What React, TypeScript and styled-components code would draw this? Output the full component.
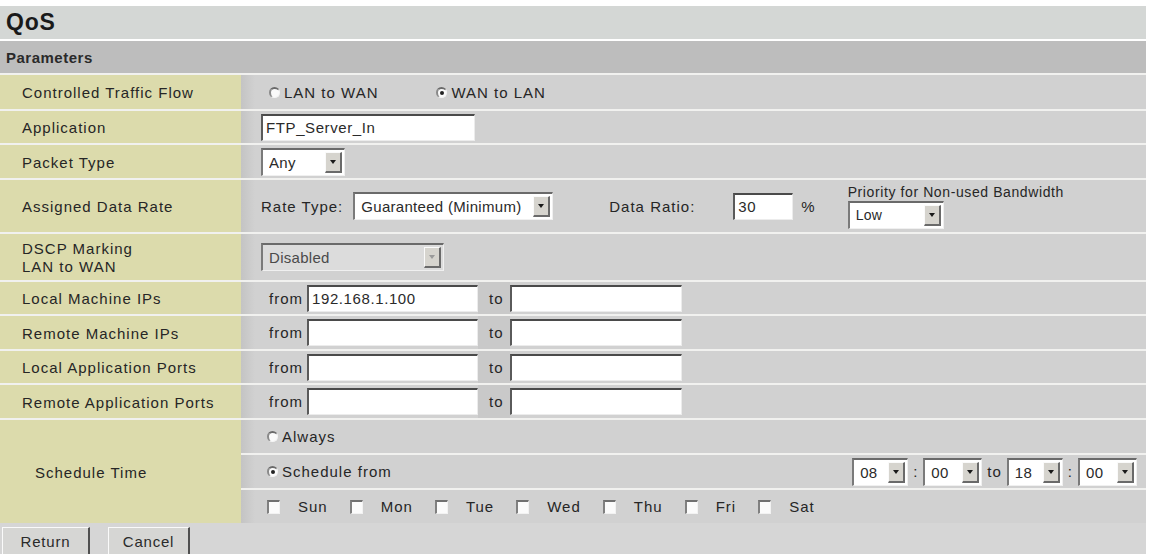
import React from 'react';
import styled, {createGlobalStyle} from 'styled-components';

const GlobalStyle = createGlobalStyle`
  body {
    margin: 0;
    background: #ffffff;
    font-family: "Liberation Sans", Arial, sans-serif;
    color: #262626;
  }
`;

const Page = styled.div`
  width: 1146px;
  padding-top: 6px;
  font-size: 15px;
  letter-spacing: 1px;
`;

const TitleBar = styled.div`
  box-sizing: border-box;
  height: 33px;
  display: flex;
  align-items: center;
  padding-left: 6px;
  background: #d4d7d5;
  font-size: 23px;
  font-weight: bold;
  letter-spacing: 0.8px;
  color: #1a1a1a;
`;

const SectionBar = styled.div`
  box-sizing: border-box;
  height: 32px;
  margin-top: 2px;
  display: flex;
  align-items: center;
  padding-left: 6px;
  background: #bdbdbd;
  font-weight: bold;
  font-size: 15px;
  letter-spacing: 0.5px;
  color: #2a2a2a;
`;

const Row = styled.div<{$h: number}>`
  box-sizing: border-box;
  display: grid;
  grid-template-columns: 241px 1fr;
  height: ${p => p.$h}px;
  border-top: 2px solid #f1f1ef;
`;

const Label = styled.div<{$indent?: number}>`
  display: flex;
  align-items: center;
  padding-left: ${p => p.$indent ?? 22}px;
  padding-top: 2px;
  background: #dcdbac;
  line-height: 18px;
`;

const Value = styled.div<{$pad?: number}>`
  display: flex;
  align-items: center;
  padding-left: ${p => p.$pad ?? 20}px;
  padding-right: 9px;
  background: linear-gradient(90deg, #c4c4c4 0, #d1d1d1 14px, #d1d1d1 100%);
`;

const SubRows = styled.div`
  display: flex;
  flex-direction: column;
  background: #f1f1ef;
  gap: 2px;
`;

const SubRow = styled(Value)`
  flex: 1;
  padding-left: 26px;
`;

const Radio = styled.span<{$on?: boolean}>`
  position: relative;
  display: inline-block;
  width: 11px;
  height: 11px;
  border-radius: 50%;
  background: #fafafa;
  border-top: 2px solid #6a6a6a;
  border-left: 2px solid #8a8a8a;
  border-right: 1px solid #f4f4f4;
  border-bottom: 1px solid #f4f4f4;
  box-sizing: border-box;
  margin-right: 4px;
  &::after {
    content: '';
    display: ${p => (p.$on ? 'block' : 'none')};
    position: absolute;
    left: 2px;
    top: 2px;
    width: 4px;
    height: 4px;
    border-radius: 50%;
    background: #222;
  }
`;

const Option = styled.span<{$gap?: number}>`
  display: inline-flex;
  align-items: center;
  margin-right: ${p => p.$gap ?? 0}px;
`;

const Input = styled.input<{$w: number}>`
  box-sizing: border-box;
  width: ${p => p.$w}px;
  height: 27px;
  padding: 0 3px;
  background: #fff;
  border-top: 2px solid #4a4a4a;
  border-left: 2px solid #5a5a5a;
  border-right: 1px solid #ececec;
  border-bottom: 1px solid #ececec;
  font-family: "Liberation Sans", Arial, sans-serif;
  font-size: 15px;
  letter-spacing: 0.6px;
  color: #2a2a2a;
  outline: none;
`;

const SelectBox = styled.div<{$w: number; $disabled?: boolean}>`
  box-sizing: border-box;
  display: inline-flex;
  align-items: center;
  width: ${p => p.$w}px;
  height: 28px;
  padding: 0 2px 0 6px;
  background: ${p => (p.$disabled ? '#dcdcdc' : '#ffffff')};
  border-top: 2px solid #6a6a6a;
  border-left: 2px solid #7a7a7a;
  border-right: 1px solid #f0f0f0;
  border-bottom: 1px solid #f0f0f0;
  letter-spacing: 0.3px;
  color: ${p => (p.$disabled ? '#4a4a4a' : '#2a2a2a')};
`;

const SelectText = styled.span`
  flex: 1;
  white-space: nowrap;
  overflow: hidden;
`;

const ArrowBtn = styled.span<{$disabled?: boolean}>`
  box-sizing: border-box;
  display: flex;
  align-items: center;
  justify-content: center;
  flex: none;
  width: 17px;
  height: 21px;
  background: #d6d4ce;
  border-top: 1px solid #fafafa;
  border-left: 1px solid #fafafa;
  border-right: 2px solid #6a6a6a;
  border-bottom: 2px solid #6a6a6a;
  &::after {
    content: '';
    border-left: 3px solid transparent;
    border-right: 3px solid transparent;
    border-top: 4px solid ${p => (p.$disabled ? '#9a9a9a' : '#1a1a1a')};
  }
`;

const Select = ({w, value, disabled}: {w: number; value: string; disabled?: boolean}) => (
  <SelectBox $w={w} $disabled={disabled}>
    <SelectText>{value}</SelectText>
    <ArrowBtn $disabled={disabled} />
  </SelectBox>
);

const Text = styled.span<{$ml?: number; $mr?: number}>`
  margin-left: ${p => p.$ml ?? 0}px;
  margin-right: ${p => p.$mr ?? 0}px;
  white-space: nowrap;
`;

const Priority = styled.div`
  display: flex;
  flex-direction: column;
  gap: 1px;
  margin-left: 32px;
  font-size: 14px;
  letter-spacing: 0.6px;
`;

const RangeValue = styled(Value)`
  padding-left: 28px;
`;

const ToCell = styled.span`
  display: flex;
  align-items: center;
  align-self: stretch;
  width: 32px;
  padding-left: 11px;
  box-sizing: border-box;
  background: #c9c9c9;
`;

const TimeGroup = styled.div`
  margin-left: auto;
  display: flex;
  align-items: center;
  gap: 5px;
`;

const Check = styled.span`
  display: inline-block;
  box-sizing: border-box;
  width: 13px;
  height: 14px;
  background: #fbfbfb;
  border-top: 2px solid #707070;
  border-left: 2px solid #808080;
  border-right: 1px solid #f2f2f2;
  border-bottom: 1px solid #f2f2f2;
`;

const Day = styled.span`
  display: inline-flex;
  align-items: center;
  gap: 18px;
  margin-right: 22px;
`;

const ButtonBar = styled.div`
  display: flex;
  align-items: flex-end;
  gap: 18px;
  height: 31px;
  padding-left: 2px;
  background: #d6d6d6;
`;

const Button = styled.button<{$w: number}>`
  box-sizing: border-box;
  width: ${p => p.$w}px;
  height: 27px;
  background: #d6d6d4;
  border-top: 1px solid #fafafa;
  border-left: 1px solid #fafafa;
  border-right: 2px solid #505050;
  border-bottom: none;
  font-family: "Liberation Sans", Arial, sans-serif;
  font-size: 15px;
  letter-spacing: 0.8px;
  color: #2a2a2a;
  padding: 0;
`;

const ranges = [
  {label: 'Local Machine IPs', from: '192.168.1.100', h: 34},
  {label: 'Remote Machine IPs', from: '', h: 35},
  {label: 'Local Application Ports', from: '', h: 34},
  {label: 'Remote Application Ports', from: '', h: 35},
];

const days = ['Sun', 'Mon', 'Tue', 'Wed', 'Thu', 'Fri', 'Sat'];

export default function App() {
  return (
    <>
      <GlobalStyle />
      <Page>
        <TitleBar>QoS</TitleBar>
        <SectionBar>Parameters</SectionBar>

        <Row $h={36}>
          <Label>Controlled Traffic Flow</Label>
          <Value $pad={28}>
            <Option $gap={58}><Radio />LAN to WAN</Option>
            <Option><Radio $on />WAN to LAN</Option>
          </Value>
        </Row>

        <Row $h={34}>
          <Label>Application</Label>
          <Value>
            <Input $w={214} defaultValue="FTP_Server_In" />
          </Value>
        </Row>

        <Row $h={35}>
          <Label>Packet Type</Label>
          <Value>
            <Select w={84} value="Any" />
          </Value>
        </Row>

        <Row $h={54}>
          <Label>Assigned Data Rate</Label>
          <Value>
            <Text $mr={10}>Rate Type:</Text>
            <Select w={200} value="Guaranteed (Minimum)" />
            <Text $ml={56} $mr={38}>Data Ratio:</Text>
            <Input $w={60} defaultValue="30" />
            <Text $ml={8}>%</Text>
            <Priority>
              <span>Priority for Non-used Bandwidth</span>
              <Select w={96} value="Low" />
            </Priority>
          </Value>
        </Row>

        <Row $h={48}>
          <Label>DSCP Marking<br />LAN to WAN</Label>
          <Value>
            <Select w={183} value="Disabled" disabled />
          </Value>
        </Row>

        {ranges.map(r => (
          <Row $h={r.h} key={r.label}>
            <Label>{r.label}</Label>
            <RangeValue>
              <Text $mr={4}>from</Text>
              <Input $w={171} defaultValue={r.from} />
              <ToCell>to</ToCell>
              <Input $w={172} defaultValue="" />
            </RangeValue>
          </Row>
        ))}

        <Row $h={105}>
          <Label $indent={35}>Schedule Time</Label>
          <SubRows>
            <SubRow>
              <Option><Radio />Always</Option>
            </SubRow>
            <SubRow>
              <Option><Radio $on />Schedule from</Option>
              <TimeGroup>
                <Select w={56} value="08" />
                <span>:</span>
                <Select w={59} value="00" />
                <span>to</span>
                <Select w={56} value="18" />
                <span>:</span>
                <Select w={59} value="00" />
              </TimeGroup>
            </SubRow>
            <SubRow $pad={26}>
              {days.map(d => (
                <Day key={d}><Check />{d}</Day>
              ))}
            </SubRow>
          </SubRows>
        </Row>

        <ButtonBar>
          <Button $w={88}>Return</Button>
          <Button $w={82}>Cancel</Button>
        </ButtonBar>
      </Page>
    </>
  );
}
